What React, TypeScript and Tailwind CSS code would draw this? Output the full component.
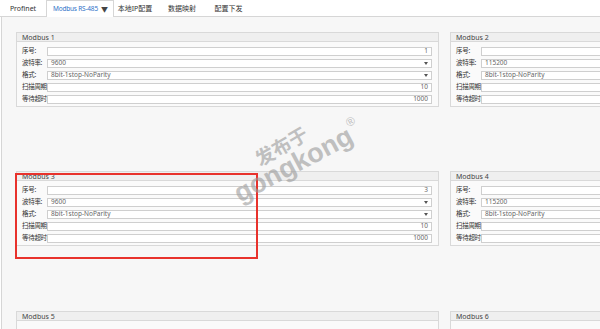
import React from "react";

type Row = { label: string; value?: string; align?: "left" | "right"; select?: boolean };

function Panel({ title, baud, show = true }: { title: string; baud: string; show?: boolean }) {
  const rows: Row[] = [
    { label: "序号:", value: title.endsWith("1") || title.endsWith("3") ? title.slice(-1) : "", align: "right" },
    { label: "波特率:", value: baud, select: true },
    { label: "格式:", value: "8bit-1stop-NoParity", select: true },
    { label: "扫描周期:", value: "10", align: "right" },
    { label: "等待超时:", value: "1000", align: "right" },
  ];
  return (
    <div className="w-[423px] h-[75px] shrink-0 border border-[#d9d9d9] bg-[#fafafa] flex flex-col">
      <div className="h-[9px] shrink-0 bg-[#efefef] border-b border-[#d9d9d9] flex items-center pl-[5px] text-[7px] leading-none text-[#444] whitespace-nowrap">
        {title}
      </div>
      {show && (
        <div className="flex flex-col gap-[3px] pt-[5px] pl-[5px] pr-[6px]">
          {rows.map((r) => (
            <div key={r.label} className="flex items-center h-[9px]">
              <div className="w-[25px] shrink-0 text-[6.5px] leading-none text-[#333] whitespace-nowrap tracking-[-0.3px]">
                {r.label}
              </div>
              <div className="flex-1 h-[9px] bg-white border border-[#cfcfcf] flex items-center px-[3px] text-[6.5px] leading-none text-[#666] whitespace-nowrap">
                {r.select ? (
                  <>
                    <span className="flex-1">{r.value}</span>
                    <span className="w-0 h-0 border-l-[2px] border-r-[2px] border-t-[3px] border-l-transparent border-r-transparent border-t-[#555]" />
                  </>
                ) : (
                  <span className={r.align === "right" ? "ml-auto" : ""}>{r.value}</span>
                )}
              </div>
            </div>
          ))}
        </div>
      )}
    </div>
  );
}

export default function App() {
  const font = { fontFamily: '"Noto Sans", "Noto Sans CJK SC", sans-serif' };
  return (
    <div className="relative w-[600px] h-[329px] overflow-hidden bg-white flex flex-col" style={font}>
      {/* Tab bar */}
      <div className="h-[17px] shrink-0 flex items-end border-b border-[#d6d6d6] text-[7px] leading-none text-[#333] whitespace-nowrap">
        <div className="w-[46px] h-[16px] flex items-center justify-center">Profinet</div>
        <div className="w-[68px] h-[17px] -mb-px bg-white border-l border-r border-t border-[#d6d6d6] flex items-center pl-[6px] text-[#2f72c8]">
          <span className="text-[6.5px] tracking-[-0.2px]">Modbus RS-485</span>
          <span className="ml-auto mr-[5px] text-[7px] text-[#444]">▼</span>
        </div>
        <div className="w-[39px] h-[16px] flex items-center justify-center pl-[3px]">本地IP配置</div>
        <div className="w-[58px] h-[16px] flex items-center justify-center">数据映射</div>
        <div className="w-[35px] h-[16px] flex items-center justify-center">配置下发</div>
      </div>

      {/* Content */}
      <div className="flex-1 ml-px border-l border-[#d6d6d6] bg-[#f7f7f7] pl-[14px] pt-[15px] flex flex-col gap-[64px] overflow-hidden">
        <div className="flex gap-[11px]">
          <Panel title="Modbus 1" baud="9600" />
          <Panel title="Modbus 2" baud="115200" />
        </div>
        <div className="flex gap-[11px]">
          <Panel title="Modbus 3" baud="9600" />
          <Panel title="Modbus 4" baud="115200" />
        </div>
        <div className="flex gap-[11px] pt-px">
          <Panel title="Modbus 5" baud="9600" show={false} />
          <Panel title="Modbus 6" baud="115200" show={false} />
        </div>
      </div>

      {/* Red highlight box */}
      <div className="absolute left-[15px] top-[173px] w-[243px] h-[86px] border-2 border-[#e8322c]" />

      {/* Watermark */}
      <div className="absolute left-[232px] top-[118px] w-[150px] h-[100px] pointer-events-none">
        <div
          className="absolute left-[24px] top-[32px] text-[19px] leading-none font-bold text-[#9a9a9a] opacity-60 -rotate-[30deg] origin-left whitespace-nowrap"
          style={{ fontFamily: '"Noto Sans CJK SC", sans-serif' }}
        >
          发布于
        </div>
        <div
          className="absolute left-[4px] top-[64px] text-[27px] leading-none font-bold text-[#9a9a9a] opacity-60 -rotate-[28deg] origin-left whitespace-nowrap"
          style={{ fontFamily: '"Liberation Sans", Arial, sans-serif' }}
        >
          gongkong<sup className="text-[12px] font-normal align-super ml-[1px]">®</sup>
        </div>
      </div>
    </div>
  );
}
